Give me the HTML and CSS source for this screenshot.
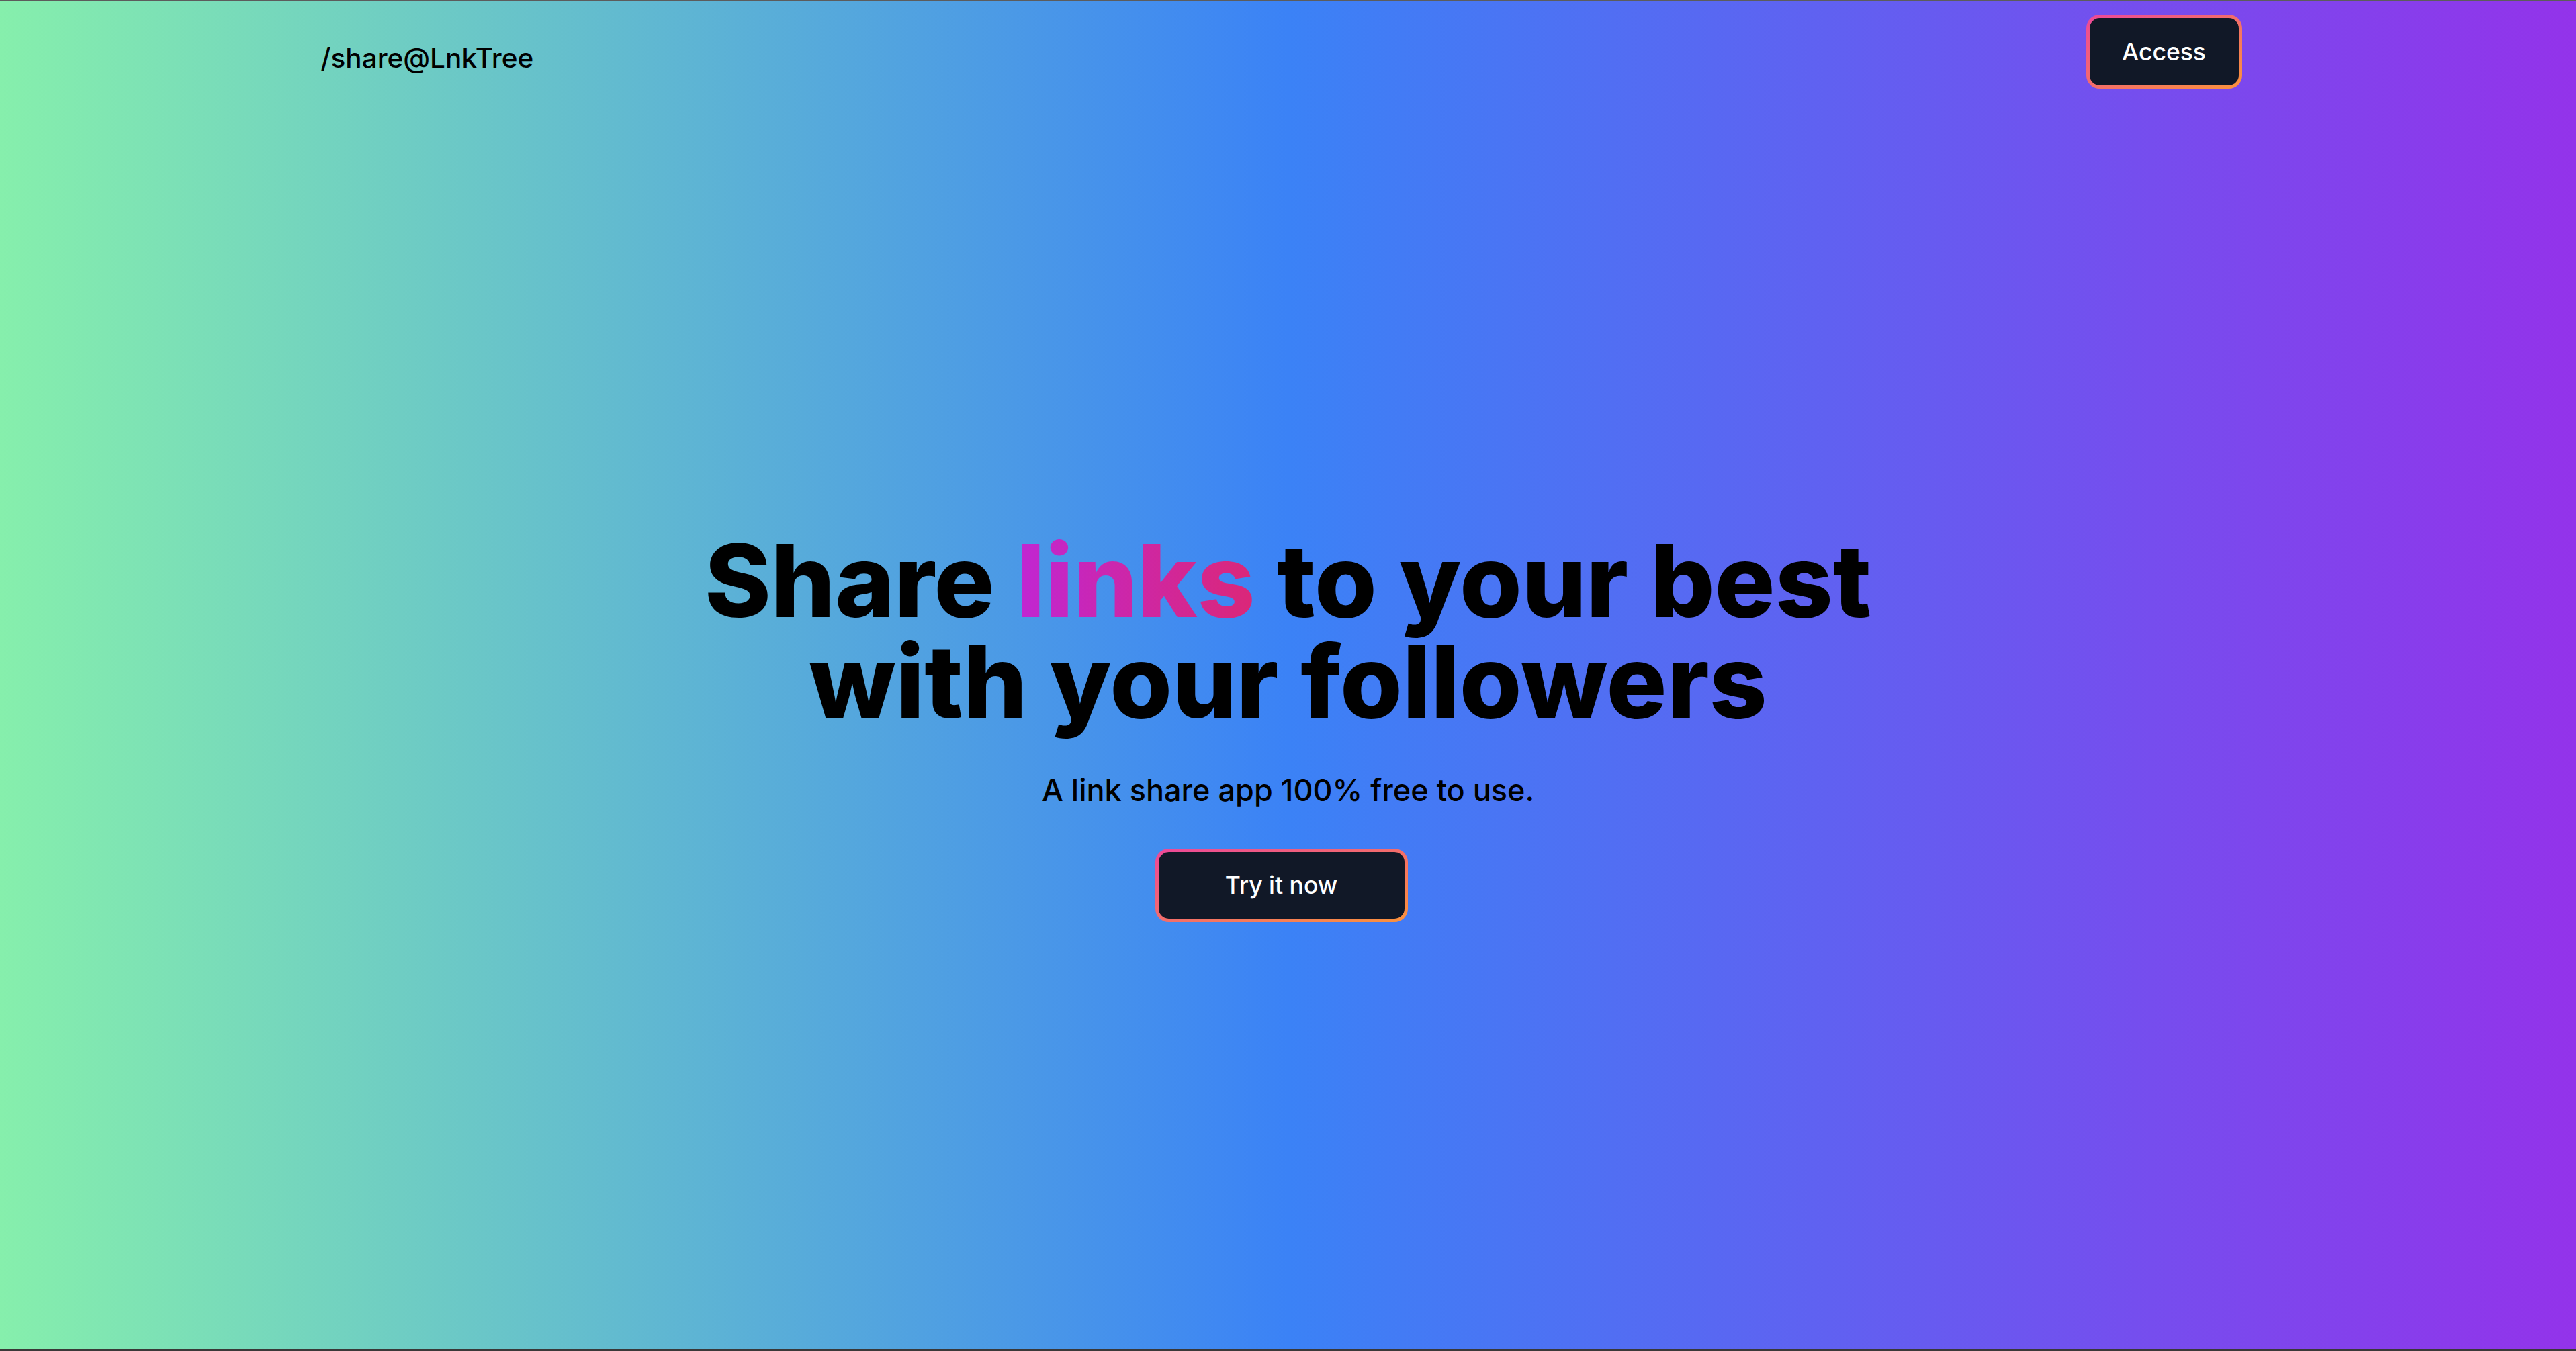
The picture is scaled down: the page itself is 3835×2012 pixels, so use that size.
FILE: index.html
```html
<!DOCTYPE html>
<html lang="en">
<head>
<meta charset="utf-8">
<title>/share@LnkTree</title>
<link rel="stylesheet" href="styles.css">
</head>
<body>
<div class="page">
  <header class="header">
    <div class="header-inner">
      <a class="logo" href="#">/share@LnkTree</a>
      <a class="btn-border btn-access" href="#"><span class="btn-inner">Access</span></a>
    </div>
  </header>
  <main class="hero">
    <h1 class="title">Share <span class="accent">links</span> to your best<br>with your followers</h1>
    <p class="subtitle">A link share app 100% free to use.</p>
    <a class="btn-border btn-try" href="#"><span class="btn-inner">Try it now</span></a>
  </main>
</div>
</body>
</html>
```
FILE: styles.css
```css
* { box-sizing: border-box; }
html, body { margin: 0; padding: 0; height: 100%; }
body {
  font-family: Inter, "Noto Sans", "Liberation Sans", sans-serif;
  color: #000;
}
.page {
  height: 2012px;
  display: flex;
  flex-direction: column;
  background: linear-gradient(to right, #86efac, #3b82f6, #9333ea);
  border-top: 2px solid #5c5c5c;
  border-bottom: 3px solid #3a3838;
}
.header { padding: 20px 0 22px; }
.header-inner {
  max-width: 2880px;
  margin: 0 auto;
  padding-right: 20px;
  display: flex;
  align-items: center;
  justify-content: space-between;
}
.logo {
  font-size: 40.5px;
  font-weight: 500;
  color: #000;
  text-decoration: none;
  padding-top: 18px;
}
.btn-border {
  display: inline-flex;
  padding: 5px;
  border-radius: 20px;
  background: linear-gradient(to bottom right, #ec4899, #fb923c);
  text-decoration: none;
}
.btn-inner {
  display: flex;
  align-items: center;
  justify-content: center;
  background: #111827;
  color: #fff;
  border-radius: 15px;
  font-size: 35.5px;
  font-weight: 500;
  height: 100px;
}
.btn-access .btn-inner { width: 222px; }
.btn-try { margin-right: 20px; }
.btn-try .btn-inner { width: 366px; height: 99px; }
.hero {
  flex: 1;
  display: flex;
  flex-direction: column;
  align-items: center;
  justify-content: center;
  text-align: center;
}
.title {
  margin: 0;
  font-size: 150px;
  line-height: 1;
  font-weight: 800;
  letter-spacing: 0;
}
.accent {
  background: linear-gradient(to right, #c026d3, #db2777);
  -webkit-background-clip: text;
  background-clip: text;
  color: transparent;
}
.subtitle {
  margin: 53px 0 53px;
  font-size: 45px;
  line-height: 1.5;
  font-weight: 500;
}
```
